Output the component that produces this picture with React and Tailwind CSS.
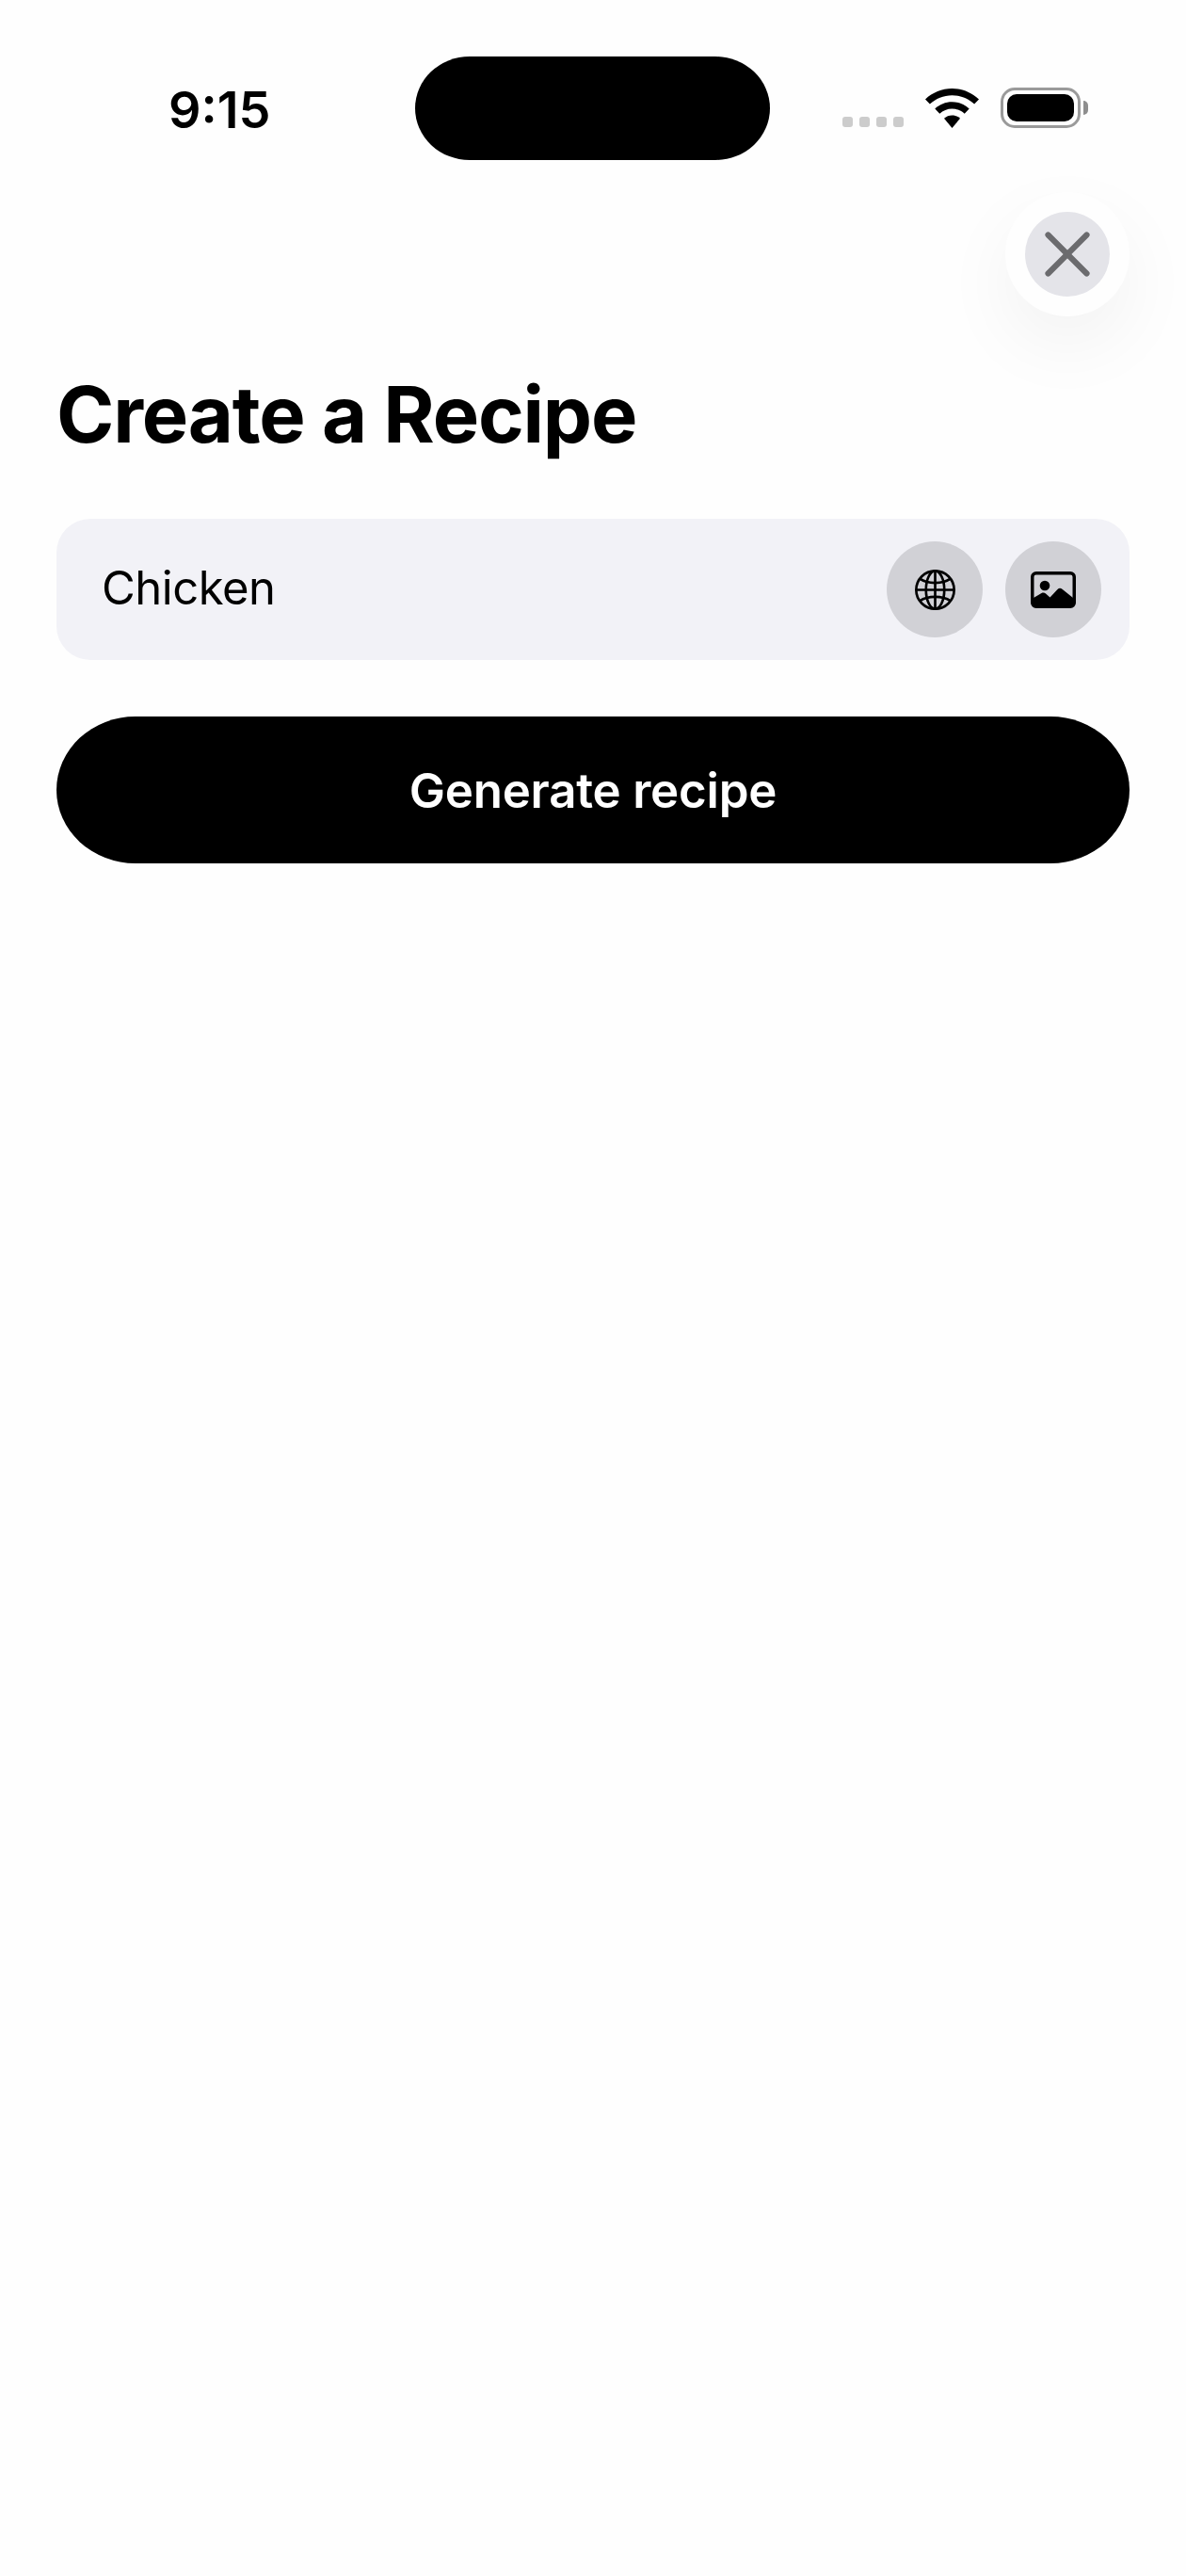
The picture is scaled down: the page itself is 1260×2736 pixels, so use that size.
import { X } from 'lucide-react';

function WifiIcon() {
  return (
    <svg viewBox="0 0 57 42" className="h-[42px] w-[57px]" fill="#000">
      <path d="M28.500 0C17.600 0 7.800 4.200 0 11.400l4.900 5.200C11.200 10.700 19.400 7.200 28.500 7.200S45.800 10.700 52.100 16.600L57 11.400C49.200 4.200 39.400 0 28.500 0Z" />
      <path d="M28.500 14.200C21.500 14.200 15.200 16.900 10.300 21.400L15.300 26.700C18.800 23.500 23.400 21.500 28.500 21.500S38.200 23.500 41.700 26.700L46.700 21.400C41.800 16.900 35.500 14.200 28.500 14.200Z" />
      <path d="M28.500 28.500C25.300 28.500 22.300 29.700 20 31.800L28.500 42 37 31.800C34.700 29.700 31.700 28.500 28.500 28.500Z" />
    </svg>
  );
}

function Battery() {
  return (
    <div className="flex items-center">
      <div className="h-[43px] w-[85px] rounded-[15px] border-[3px] border-[#9a9a9a] p-[4px]">
        <div className="h-full w-full rounded-[10px] bg-black" />
      </div>
      <div className="ml-[3px] h-[15px] w-[5px] rounded-r-[5px] bg-[#8e8e8e]" />
    </div>
  );
}

function GlobeIcon() {
  return (
    <svg viewBox="0 0 42 42" className="h-[43px] w-[43px]" fill="none" stroke="#000" strokeWidth="2.600">
      <circle cx="21" cy="21" r="19.700" />
      <ellipse cx="21" cy="21" rx="9.500" ry="19.700" />
      <path d="M21 1.300V40.700M1.300 21H40.700" />
      <path d="M5 9.500C9.500 12.500 15 13.800 21 13.800S32.500 12.500 37 9.500" />
      <path d="M5 32.500C9.500 29.500 15 28.200 21 28.200S32.500 29.500 37 32.500" />
    </svg>
  );
}

function PhotoIcon() {
  return (
    <svg viewBox="0 0 48 39" className="h-[39px] w-[48px]">
      <rect x="1.750" y="1.750" width="44.500" height="35.500" rx="4" fill="none" stroke="#000" strokeWidth="3.500" />
      <circle cx="15" cy="15" r="5.300" fill="#000" />
      <path d="M3 28L11.500 23C13 22.200 15 22.400 16 23.500L20.500 27.500 28.500 19C30 17.500 32 17.500 33.500 18.800L45 28V36H3Z" fill="#000" />
    </svg>
  );
}

function RoundButton({ children }) {
  return (
    <button className="flex h-[102px] w-[102px] items-center justify-center rounded-full bg-[#d1d1d6]">
      {children}
    </button>
  );
}

export default function App() {
  return (
    <div className="h-[2736px] w-[1260px] bg-[#fefefe] px-[60px] font-['Inter',sans-serif] text-black">
      {/* status bar */}
      <div className="flex h-[170px] items-start pt-[60px]">
        <div className="w-[381px] pl-[119px] pt-[24px] text-[54px] leading-[66px] font-semibold">9:15</div>
        <div className="h-[110px] w-[377px] rounded-[58px/55px] bg-black" />
        <div className="ml-[77px] mt-[33px] flex items-end">
          <div className="flex gap-[7px] pb-[1px]">
            <span className="h-[11px] w-[11px] rounded-[3px] bg-[#cccccc]" />
            <span className="h-[11px] w-[11px] rounded-[3px] bg-[#cccccc]" />
            <span className="h-[11px] w-[11px] rounded-[3px] bg-[#cccccc]" />
            <span className="h-[11px] w-[11px] rounded-[3px] bg-[#cccccc]" />
          </div>
          <div className="ml-[23px]">
            <WifiIcon />
          </div>
          <div className="ml-[23px]">
            <Battery />
          </div>
        </div>
      </div>

      {/* close */}
      <div className="mt-[34px] flex justify-end">
        <div className="flex h-[132px] w-[132px] items-center justify-center rounded-full bg-[#fefefe] shadow-[0_30px_80px_rgba(0,0,0,0.05)]">
          <button className="flex h-[90px] w-[90px] items-center justify-center rounded-full bg-[#e4e4e9]">
            <X size={82} strokeWidth={1.800} color="#6b6b6e" />
          </button>
        </div>
      </div>

      <h1 className="mt-[54px] mb-[61px] text-[83px] leading-[100px] font-bold tracking-[-1.200px]">Create a Recipe</h1>

      <div className="flex h-[150px] items-center rounded-[36px] bg-[#f2f2f7] pl-[48px] pr-[30px]">
        <div className="flex-1 pb-[2px] text-[49px] leading-[60px] tracking-[-0.500px]">Chicken</div>
        <div className="flex gap-[24px]">
          <RoundButton>
            <GlobeIcon />
          </RoundButton>
          <RoundButton>
            <PhotoIcon />
          </RoundButton>
        </div>
      </div>

      <button className="mt-[60px] flex h-[156px] w-full items-center justify-center rounded-[84px/78px] bg-black pt-[2px] text-[51px] font-semibold tracking-[-0.200px] text-white">
        Generate recipe
      </button>
    </div>
  );
}
